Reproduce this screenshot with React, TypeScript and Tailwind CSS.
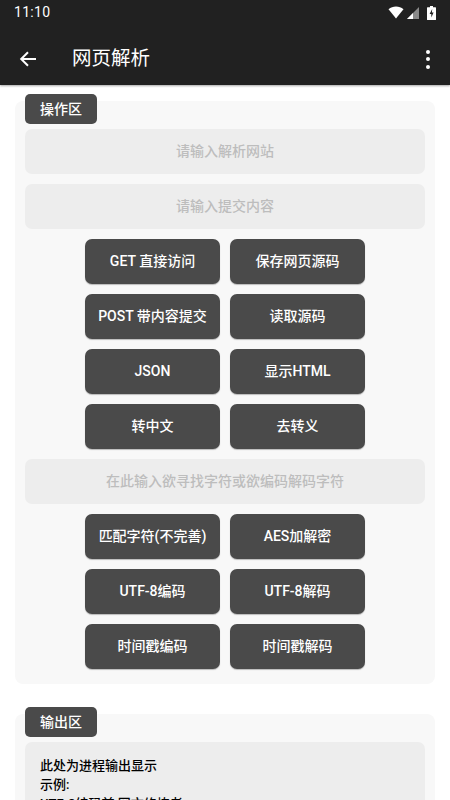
const font = "font-['Roboto','Noto_Sans_CJK_SC',sans-serif]";

function Btn({ t }: { t: string }) {
  return (
    <div className="w-[135px] h-[45px] flex items-center justify-center rounded-[7px] bg-[#4a4a4a] text-white text-[14px] font-medium shadow-[0_1px_1px_rgba(0,0,0,0.25)] whitespace-nowrap">
      {t}
    </div>
  );
}

function Field({ t }: { t: string }) {
  return (
    <div className="h-[45px] flex items-center justify-center rounded-[7px] bg-[#ededed] text-[#bdbdbd] text-[14px] font-medium">
      {t}
    </div>
  );
}

function Tag({ t }: { t: string }) {
  return (
    <div className="w-[72px] h-[30px] -mt-[7px] flex items-center justify-center rounded-[5px] bg-[#4a4a4a] text-white text-[14px] font-medium">
      {t}
    </div>
  );
}

function Pair({ a, b }: { a: string; b: string }) {
  return (
    <div className="flex justify-center gap-[10px]">
      <Btn t={a} />
      <Btn t={b} />
    </div>
  );
}

export default function App() {
  return (
    <div className={`w-[450px] h-[800px] overflow-hidden bg-white ${font}`}>
      <header className="h-[85px] bg-[#212121] text-white shadow-[0_1px_2px_rgba(0,0,0,0.35)]">
        <div className="h-[25px] flex items-center justify-between pl-[14px] pr-[14px]">
          <span className="text-[14px] tracking-[0.3px]">11:10</span>
          <div className="flex items-center gap-[6px]">
            <svg width="16" height="13" viewBox="0 0 16 13" fill="#fff">
              <path d="M0.5 3.2C2.6 1.4 5.2 0.4 8 0.4s5.4 1 7.5 2.8L8 12.4z" />
            </svg>
            <svg width="12" height="12" viewBox="0 0 12 12" className="-ml-[3px]">
              <path d="M0 12L12 0V12z" fill="#8a8a8a" />
              <path d="M0 12L6 6V12z" fill="#fff" />
            </svg>
            <svg width="9" height="14" viewBox="0 0 9 14" className="ml-[2px]">
              <path d="M3 0H6V1.2H8.4A.6.6 0 0 1 9 1.8V13.4a.6.6 0 0 1-.6.6H.6A.6.6 0 0 1 0 13.4V1.8A.6.6 0 0 1 .6 1.2H3z" fill="#fff" />
              <path d="M5.2 3L2.6 8H4.3V11.4L6.6 6.6H4.9z" fill="#212121" />
            </svg>
          </div>
        </div>
        <div className="h-[60px] flex items-center pt-[8px]">
          <svg width="18" height="18" viewBox="0 0 18 18" fill="none" stroke="#fff" strokeWidth="2" className="ml-[19px]">
            <path d="M17 9H3M9 2.2L2.2 9 9 15.8" />
          </svg>
          <span className="ml-[35px] text-[19.5px]">网页解析</span>
          <div className="ml-auto mr-[20px] flex flex-col gap-[3.5px]">
            <span className="w-[4px] h-[4px] rounded-full bg-white" />
            <span className="w-[4px] h-[4px] rounded-full bg-white" />
            <span className="w-[4px] h-[4px] rounded-full bg-white" />
          </div>
        </div>
      </header>

      <section className="flow-root mt-[16px] mx-[15px] h-[583px] rounded-[8px] bg-[#f8f8f8] px-[10px]">
        <Tag t="操作区" />
        <div className="mt-[5px] flex flex-col gap-[10px]">
          <Field t="请输入解析网站" />
          <Field t="请输入提交内容" />
          <Pair a="GET 直接访问" b="保存网页源码" />
          <Pair a="POST 带内容提交" b="读取源码" />
          <Pair a="JSON" b="显示HTML" />
          <Pair a="转中文" b="去转义" />
          <Field t="在此输入欲寻找字符或欲编码解码字符" />
          <Pair a="匹配字符(不完善)" b="AES加解密" />
          <Pair a="UTF-8编码" b="UTF-8解码" />
          <Pair a="时间戳编码" b="时间戳解码" />
        </div>
      </section>

      <section className="flow-root mt-[30px] mx-[15px] h-[200px] rounded-[8px] bg-[#f8f8f8] px-[10px]">
        <Tag t="输出区" />
        <div className="mt-[5px] h-[190px] rounded-[7px] bg-[#ededed] px-[15px] pt-[14px] text-[13px] leading-[19px] font-medium text-black">
          <p>此处为进程输出显示</p>
          <p>示例:</p>
          <p>UTF-8编码前:网文修炼者</p>
        </div>
      </section>
    </div>
  );
}
